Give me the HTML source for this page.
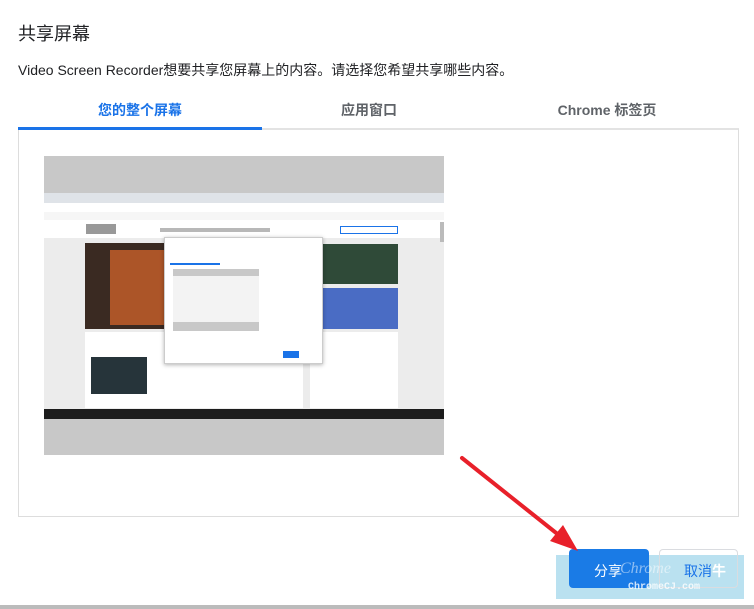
<!DOCTYPE html>
<html><head><meta charset="utf-8"><style>
*{margin:0;padding:0;box-sizing:border-box}
body{width:754px;height:609px;background:#fff;position:relative;overflow:hidden;font-family:"Liberation Sans","Noto Sans CJK SC",sans-serif;color:#202124}
.a{position:absolute}
</style></head><body>
<div class="a" style="left:18px;top:20px;font-size:18px;">共享屏幕</div>
<div class="a" style="left:18px;top:60px;font-size:14px;">Video Screen Recorder想要共享您屏幕上的内容。请选择您希望共享哪些内容。</div>
<div class="a" style="left:18px;top:100px;width:244px;text-align:center;font-size:14px;font-weight:bold;color:#1a73e8">您的整个屏幕</div>
<div class="a" style="left:262px;top:100px;width:214px;text-align:center;font-size:14px;font-weight:bold;color:#5f6368">应用窗口</div>
<div class="a" style="left:476px;top:100px;width:262px;text-align:center;font-size:14px;font-weight:bold;color:#5f6368">Chrome 标签页</div>
<div class="a" style="left:18px;top:128px;width:721px;height:389px;border:1px solid #ddd;border-top:2px solid #e3e3e3"></div>
<div class="a" style="left:18px;top:127px;width:244px;height:3px;background:#1a73e8"></div>
<!-- thumbnail -->
<div class="a" style="left:44px;top:156px;width:400px;height:299px;background:#c8c8c8"></div>
<div class="a" style="left:44px;top:193px;width:400px;height:226px;background:#ececec"></div>
<div class="a" style="left:44px;top:193px;width:400px;height:10px;background:#dfe3e8"></div>
<div class="a" style="left:44px;top:203px;width:400px;height:9px;background:#fff"></div>
<div class="a" style="left:44px;top:212px;width:400px;height:8px;background:#f6f6f6"></div>
<div class="a" style="left:44px;top:220px;width:400px;height:18px;background:#fff"></div>
<div class="a" style="left:86px;top:224px;width:30px;height:10px;background:#555;opacity:.6"></div>
<div class="a" style="left:160px;top:228px;width:110px;height:4px;background:#888;opacity:.6"></div>
<div class="a" style="left:340px;top:226px;width:58px;height:8px;border:1px solid #1a73e8"></div>
<div class="a" style="left:85px;top:243px;width:80px;height:86px;background:#3a2a22"></div>
<div class="a" style="left:110px;top:250px;width:55px;height:75px;background:#c9602a;opacity:.8"></div>
<div class="a" style="left:323px;top:244px;width:75px;height:40px;background:#2f4a38"></div>
<div class="a" style="left:323px;top:288px;width:75px;height:41px;background:#4a6cc4"></div>
<div class="a" style="left:85px;top:332px;width:218px;height:76px;background:#fff"></div>
<div class="a" style="left:91px;top:357px;width:56px;height:37px;background:#26343a"></div>
<div class="a" style="left:310px;top:332px;width:88px;height:76px;background:#fff"></div>
<div class="a" style="left:440px;top:222px;width:4px;height:20px;background:#bbb"></div>
<div class="a" style="left:164px;top:237px;width:159px;height:127px;background:#fff;border:1px solid #ccc;box-shadow:0 1px 4px rgba(0,0,0,.3)"></div>
<div class="a" style="left:170px;top:263px;width:50px;height:2px;background:#1a73e8"></div>
<div class="a" style="left:173px;top:269px;width:86px;height:62px;background:#c8c8c8"></div>
<div class="a" style="left:173px;top:276px;width:86px;height:46px;background:#f3f3f3"></div>
<div class="a" style="left:283px;top:351px;width:16px;height:7px;background:#1a73e8"></div>
<div class="a" style="left:44px;top:409px;width:400px;height:10px;background:#1c1c1c"></div>
<!-- buttons -->
<div class="a" style="left:556px;top:555px;width:188px;height:44px;background:rgba(140,205,230,.6)"></div>
<div class="a" style="left:569px;top:549px;width:80px;height:39px;background:#1a7be6;border-radius:4px"></div>
<div class="a" style="left:659px;top:549px;width:79px;height:39px;border:1px solid #dadce0;border-radius:4px"></div>
<div class="a" style="left:594px;top:561px;font-size:14px;color:#fff">分享</div>
<div class="a" style="left:684px;top:561px;font-size:14px;color:#1a73e8">取消<span style="color:#fff;font-weight:bold">牛</span></div>
<div class="a" style="left:620px;top:560px;font-size:16px;font-style:italic;color:rgba(255,255,255,.5);font-family:'Liberation Serif',serif">Chrome</div>
<div class="a" style="left:628px;top:582px;font-size:10px;font-weight:bold;color:rgba(255,255,255,.8);font-family:'Liberation Mono',monospace">ChromeCJ.com</div>
<svg class="a" style="left:0;top:0" width="754" height="609"><line x1="462" y1="458" x2="565" y2="540" stroke="#e8202a" stroke-width="4" stroke-linecap="round"/><polygon points="578,551 550,541 563,525" fill="#e8202a"/></svg>
<div class="a" style="left:0;top:605px;width:754px;height:4px;background:#bbb"></div>
</body></html>
